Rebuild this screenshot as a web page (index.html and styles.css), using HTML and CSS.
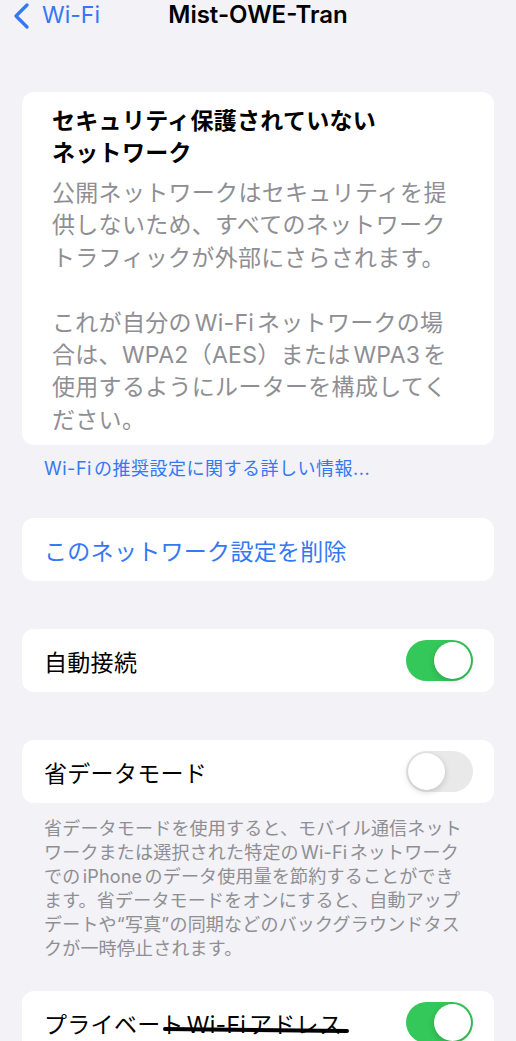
FILE: index.html
```html
<!DOCTYPE html>
<html lang="ja">
<head>
<meta charset="UTF-8">
<meta name="viewport" content="width=device-width, initial-scale=1.0">
<title>Mist-OWE-Tran</title>
<link rel="stylesheet" href="styles.css">
</head>
<body>
<header class="nav">
    <a class="nav-back" href="#">
        <svg class="chevron" width="20" height="26" viewBox="0 0 20 26">
            <path d="M15 2 L4 13 L15 24" fill="none" stroke="currentColor" stroke-width="3.2" stroke-linecap="round" stroke-linejoin="round"/>
        </svg>
        <span>Wi-Fi</span>
    </a>
    <h1 class="nav-title">Mist-OWE-Tran</h1>
    <div></div>
</header>

<main class="settings">
    <section class="group notice">
        <h2 class="notice-title">セキュリティ保護されていない<br>ネットワーク</h2>
        <p class="notice-text">公開ネットワークはセキュリティを提<br>供しないため、すべてのネットワーク<br>トラフィックが外部にさらされます。</p>
        <p class="notice-text">これが自分のWi-Fiネットワークの場<br>合は、WPA2（AES）またはWPA3を<br>使用するようにルーターを構成してく<br>ださい。</p>
    </section>
    <a class="help-link" href="#">Wi-Fiの推奨設定に関する詳しい情報...</a>

    <section class="group row">
        <a class="row-action" href="#">このネットワーク設定を削除</a>
    </section>

    <section class="group row">
        <span class="row-label">自動接続</span>
        <span class="switch on"></span>
    </section>

    <section class="group row">
        <span class="row-label">省データモード</span>
        <span class="switch"></span>
    </section>
    <p class="footnote">省データモードを使用すると、モバイル通信ネット<br>ワークまたは選択された特定のWi-Fiネットワーク<br>でのiPhoneのデータ使用量を節約することができ<br>ます。省データモードをオンにすると、自動アップ<br>デートや“写真”の同期などのバックグラウンドタス<br>クが一時停止されます。</p>

    <section class="group row">
        <span class="row-label">プライベー<span class="scribbled">トWi-Fiアドレス</span></span>
        <span class="switch on"></span>
    </section>
</main>
</body>
</html>
```

FILE: styles.css
```css
:root {
    --bg: #f2f2f7;
    --card: #ffffff;
    --blue: #3478f6;
    --green: #34c759;
    --gray-text: #8e8e93;
    --label: #000000;
}

body {
    margin: 0;
    background: var(--bg);
    font-family: "Inter", "Noto Sans CJK JP", sans-serif;
    color: var(--label);
    overflow: hidden;
    text-autospace: normal;
}

.nav {
    display: grid;
    grid-template-columns: 1fr auto 1fr;
    align-items: center;
    height: 30px;
    padding: 0 12px;
}

.nav-back {
    display: flex;
    align-items: center;
    gap: 10px;
    color: var(--blue);
    text-decoration: none;
    font-size: 23px;
    line-height: 30px;
}

.chevron {
    margin-top: 2px;
}

.nav-title {
    margin: 0;
    font-size: 24px;
    font-weight: 600;
    line-height: 30px;
}

.settings {
    display: flex;
    flex-direction: column;
    padding: 62px 22px 0;
}

.group {
    background: var(--card);
    border-radius: 12px;
}

.notice {
    padding: 13px 30px 9px;
}

.notice-title {
    margin: 0;
    font-size: 23px;
    font-weight: 700;
    line-height: 32px;
    letter-spacing: 0.3px;
}

.notice-text {
    margin: 8px 0 0;
    font-size: 23px;
    line-height: 32.4px;
    letter-spacing: 0.3px;
    color: var(--gray-text);
    white-space: nowrap;
}

.notice-text + .notice-text {
    margin-top: 32.4px;
}

.help-link {
    margin: 12px 0 37px 22px;
    font-size: 18px;
    line-height: 24px;
    letter-spacing: 0.5px;
    color: var(--blue);
    text-decoration: none;
}

.row {
    display: flex;
    align-items: center;
    justify-content: space-between;
    height: 63px;
    padding: 0 21px 0 22px;
    margin-bottom: 48px;
    font-size: 23px;
    letter-spacing: 0.3px;
}

.row-action {
    color: var(--blue);
    text-decoration: none;
}

.switch {
    position: relative;
    width: 67px;
    height: 41px;
    border-radius: 21px;
    background: #e9e9ea;
}

.switch::after {
    content: "";
    position: absolute;
    top: 2px;
    left: 2px;
    width: 37px;
    height: 37px;
    border-radius: 50%;
    background: #fff;
    box-shadow: 0 2px 6px rgba(0, 0, 0, 0.16), 0 0 1px rgba(0, 0, 0, 0.1);
}

.switch.on {
    background: var(--green);
}

.switch.on::after {
    left: 28px;
}

/* hand-drawn strike over part of the label */
.scribbled {
    position: relative;
}

.scribbled::after {
    content: "";
    position: absolute;
    left: 2px;
    right: -6px;
    top: 17px;
    height: 4px;
    border-radius: 2px;
    background: #000;
    transform: rotate(0.6deg);
}

.footnote {
    margin: -34px 0 30px 22px;
    font-size: 18px;
    line-height: 24px;
    letter-spacing: 0.2px;
    color: var(--gray-text);
    white-space: nowrap;
}
```
